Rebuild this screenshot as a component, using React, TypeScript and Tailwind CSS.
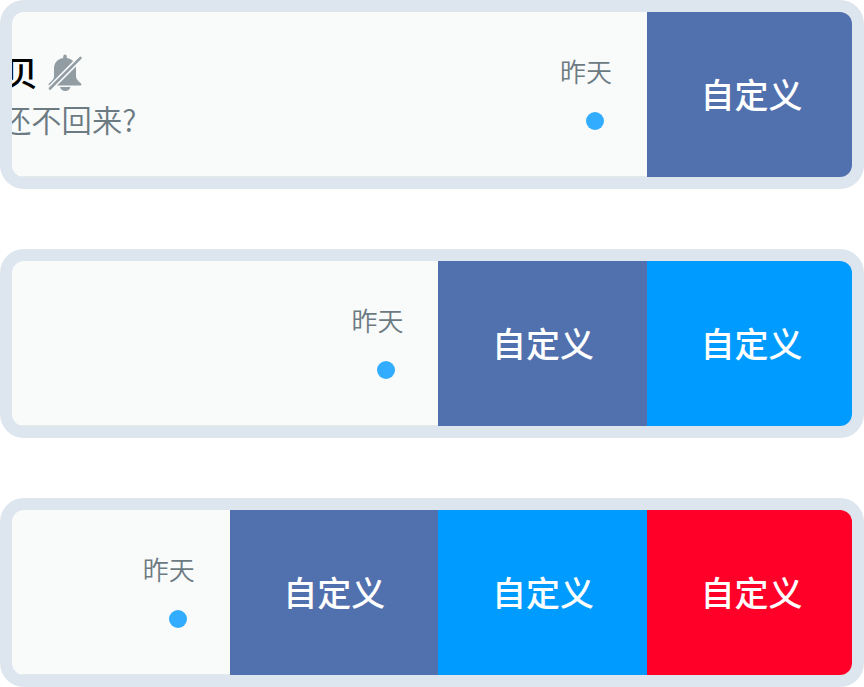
const font = "font-['Noto_Sans_CJK_SC',sans-serif]";

function Meta() {
  return (
    <div className="mr-[35px] flex flex-col items-center pt-[40px]">
      <span className="text-[26px] leading-[38px] font-[350] whitespace-nowrap text-[#6c7a82]">昨天</span>
      <span className="mt-[21.5px] ml-[17.5px] size-[18px] rounded-full bg-[#32acff]" />
    </div>
  );
}

function Row({ actions, children }: { actions: string[]; children?: React.ReactNode }) {
  return (
    <section className="h-[189px] w-[864px] rounded-[24px] bg-[#dde5ee] p-3">
      <div className="flex h-[165px] overflow-hidden rounded-[12px] bg-[#f9fbfb]">
        <div className="flex min-w-0 flex-1 justify-between border-b border-[#e3e8ea]">
          <div className="min-w-0">{children}</div>
          <Meta />
        </div>
        {actions.map((color, i) => (
          <button
            key={color}
            className={`flex shrink-0 items-center justify-start pl-[53.5px] pb-[2px] text-[34px] font-medium whitespace-nowrap text-white ${i === actions.length - 1 ? "w-[205px]" : "w-[208.6px]"} ${color}`}
          >
            自定义
          </button>
        ))}
      </div>
    </section>
  );
}

function MutedBell() {
  return (
    <svg width="36" height="38" viewBox="0 0 36 38" fill="none">
      <path
        d="M15.200 4V2.400a1.800 1.800 0 0 1 3.600 0V4C24.500 4.800 28 9 28 14.500V22c0 3.200 2 4.800 4.600 7 1.400 1.200 1 2.400-.3 2.400H1.700C.4 31.400 0 30.200 1.400 29 4 26.800 6 25.200 6 22v-7.500C6 9 9.500 4.800 15.200 4Z"
        fill="#929da3"
      />
      <path d="M12 33h10.500c-.7 2.500-2.500 4-5.200 4s-4.600-1.500-5.300-4Z" fill="#929da3" />
      <path d="M-1 37.500 35.500.8" stroke="#f9fbfb" strokeWidth="5.800" />
      <path d="M2 34.500 32.500 3.800" stroke="#929da3" strokeWidth="2.600" strokeLinecap="round" />
    </svg>
  );
}

export default function App() {
  return (
    <main className={`flex h-[687px] w-[864px] flex-col gap-[60px] bg-white ${font}`}>
      <Row actions={["bg-[#5170ae]"]}>
        <div className="pt-[40px]">
          <div className="-ml-[8px] flex h-[42px] items-center gap-[10px]">
            <span className="pb-[3px] text-[34px] leading-[42px] font-medium text-black">贝</span>
            <MutedBell />
          </div>
          <div className="-ml-[11px] -mt-[2px] text-[30.3px] leading-[54px] font-[350] whitespace-nowrap text-[#6c7a82]">还不回来?</div>
        </div>
      </Row>
      <Row actions={["bg-[#5170ae]", "bg-[#009bff]"]} />
      <Row actions={["bg-[#5170ae]", "bg-[#009bff]", "bg-[#ff0028]"]} />
    </main>
  );
}
